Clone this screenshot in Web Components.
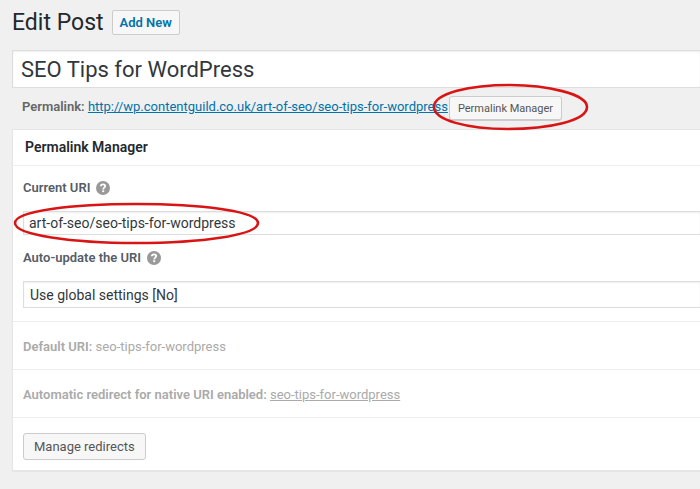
<!DOCTYPE html>
<html lang="en">
<head>
<meta charset="utf-8">
<meta name="viewport" content="width=device-width, initial-scale=1">
<title>Edit Post</title>
<style>
  body {
    margin: 0;
    background: #f0f0f0;
    color: #555d66;
    font: 13px/18px Roboto, "Liberation Sans", sans-serif;
  }
</style>
</head>
<body>

<post-editor>
  <wp-button slot="action" variant="action">Add New</wp-button>

  <post-title value="SEO Tips for WordPress"></post-title>

  <perma-link href="http://wp.contentguild.co.uk/art-of-seo/seo-tips-for-wordpress">
    <hand-circle shape="button"><wp-button variant="small">Permalink Manager</wp-button></hand-circle>
  </perma-link>

  <meta-box heading="Permalink Manager">
    <meta-fields>
      <uri-field label="Current URI" value="art-of-seo/seo-tips-for-wordpress"></uri-field>
      <choice-field label="Auto-update the URI" options="Use global settings [No]|No|Yes"></choice-field>
    </meta-fields>
    <info-row label="Default URI:">seo-tips-for-wordpress</info-row>
    <info-row label="Automatic redirect for native URI enabled:" href="#redirect">seo-tips-for-wordpress</info-row>
    <meta-footer><wp-button>Manage redirects</wp-button></meta-footer>
  </meta-box>
</post-editor>

<script>
// small base class, every element clones its own template
class WpElement extends HTMLElement {
  constructor() {
    super();
    this.attachShadow({ mode: 'open' });
    const template = document.createElement('template');
    template.innerHTML = this.constructor.html;
    this.shadowRoot.appendChild(template.content.cloneNode(true));
  }

  $(selector) {
    return this.shadowRoot.querySelector(selector);
  }
}

class PostEditor extends WpElement {
  static html = `
    <style>
      :host { display: block; overflow: hidden; padding: 8px 0 16px 12px; }
      header { display: flex; align-items: center; gap: 8px; margin-bottom: 13px; }
      h1 { margin: 0; color: #23282d; font-size: 23px; font-weight: 400; line-height: 29px; }
    </style>
    <header>
      <h1>Edit Post</h1>
      <slot name="action"></slot>
    </header>
    <main><slot></slot></main>
  `;
}

class WpButton extends WpElement {
  static html = `
    <style>
      :host { display: inline-block; }
      button {
        display: block;
        box-sizing: border-box;
        height: 27px;
        margin: 0;
        padding: 0 10px;
        border: 1px solid #ccc;
        border-radius: 3px;
        background: #f7f7f7;
        color: #555;
        font: 13px/24px Roboto, "Liberation Sans", sans-serif;
        white-space: nowrap;
        cursor: pointer;
      }
      :host([variant="small"]) button {
        height: 25px;
        padding: 0 8px;
        box-shadow: inset 0 -1px 0 #ccc;
        font-size: 11px;
        line-height: 22px;
      }
      :host([variant="action"]) button {
        height: 25px;
        padding: 0 7px;
        border-radius: 2px;
        color: #0073aa;
        font-weight: 600;
        line-height: 22px;
      }
    </style>
    <button type="button"><slot></slot></button>
  `;
}

class PostTitle extends WpElement {
  static html = `
    <style>
      :host { display: block; }
      input {
        display: block;
        box-sizing: border-box;
        width: 100%;
        height: 38px;
        padding: 3px 8px;
        border: 1px solid #ddd;
        border-right: 0;
        border-radius: 0;
        background: #fff;
        box-shadow: inset 0 1px 2px rgba(0, 0, 0, .07);
        color: #32373c;
        font: 22px/28px Roboto, "Liberation Sans", sans-serif;
      }
    </style>
    <input type="text" aria-label="Title">
  `;

  connectedCallback() {
    this.$('input').value = this.getAttribute('value');
  }
}

class PermaLink extends WpElement {
  static html = `
    <style>
      :host { display: flex; align-items: flex-start; gap: 1px; padding: 8px 10px; line-height: 22px; white-space: nowrap; }
      strong { color: #666; font-weight: 600; }
      a { color: #0073aa; }
    </style>
    <span><strong>Permalink:</strong> <a></a></span>
    <slot></slot>
  `;

  connectedCallback() {
    const link = this.$('a');
    link.href = this.getAttribute('href');
    link.textContent = this.getAttribute('href');
  }
}

// red pen stroke that lies over whatever is slotted in
class HandCircle extends WpElement {
  static html = `
    <style>
      :host { display: block; position: relative; }
      svg {
        position: absolute;
        z-index: 1;
        overflow: visible;
        pointer-events: none;
      }
      path { fill: none; stroke: #d91414; stroke-width: 2.6; }
      .button { left: -17px; top: -13px; }
      .text { left: -9px; top: -9px; }
      :host([shape="button"]) .text,
      :host([shape="text"]) .button { display: none; }
    </style>
    <slot></slot>
    <svg class="button" width="156" height="48" viewBox="0 0 156 48" aria-hidden="true">
      <path d="M78 2 C115 2 155 11 155 24 C155 38 116 46 76 46 C35 46 2 37 2 24 C2 10 38 2 78 2Z"/>
    </svg>
    <svg class="text" width="246" height="43" viewBox="0 0 246 43" aria-hidden="true">
      <path d="M122 2 C186 2 244 9 244 21 C244 33 188 41 122 41 C58 41 1 33 1 21 C1 9 58 2 122 2Z"/>
    </svg>
  `;
}

class MetaBox extends WpElement {
  static html = `
    <style>
      :host {
        display: block;
        border: 1px solid #e5e5e5;
        border-right: 0;
        background: #fff;
        box-shadow: 0 1px 1px rgba(0, 0, 0, .04);
      }
      h2 {
        margin: 0;
        padding: 8px 12px 9px;
        border-bottom: 1px solid #eee;
        color: #23282d;
        font-size: 14px;
        font-weight: 600;
        line-height: 18px;
      }
    </style>
    <h2></h2>
    <slot></slot>
  `;

  connectedCallback() {
    this.$('h2').textContent = this.getAttribute('heading');
  }
}

class MetaFields extends WpElement {
  static html = `
    <style>
      :host { display: grid; gap: 14px; padding: 13px 0 13px 10px; }
    </style>
    <slot></slot>
  `;
}

class HelpIcon extends WpElement {
  static html = `
    <style>
      :host { display: block; width: 14px; height: 14px; }
      svg { display: block; }
    </style>
    <svg width="14" height="14" viewBox="0 0 14 14" aria-hidden="true">
      <circle cx="7" cy="7" r="7" fill="#999"/>
      <path d="M4.8 5.2 C4.9 3.9 5.8 3.3 7 3.3 C8.3 3.3 9.2 4 9.2 5.1 C9.2 6.6 7.2 6.6 7.2 8.4" fill="none" stroke="#fff" stroke-width="1.8"/>
      <rect x="6.2" y="9.3" width="2" height="1.8" fill="#fff"/>
    </svg>
  `;
}

const fieldStyle = `
  :host { display: block; }
  .label { display: flex; align-items: center; gap: 6px; margin-bottom: 14px; }
  label { color: #555d66; font-weight: 600; }
  input, select {
    display: block;
    box-sizing: border-box;
    width: 100%;
    margin: 0;
    border: 1px solid #ddd;
    border-right: 0;
    border-radius: 0;
    background: #fff;
    box-shadow: inset 0 1px 2px rgba(0, 0, 0, .07);
    color: #32373c;
    font: 14px/18px Roboto, "Liberation Sans", sans-serif;
    appearance: none;
  }
  input { height: 24px; padding: 2px 5px; }
  select { height: 27px; padding: 3px 6px; }
`;

class UriField extends WpElement {
  static html = `
    <style>${fieldStyle}</style>
    <div class="label"><label for="uri"></label><help-icon></help-icon></div>
    <hand-circle shape="text"><input type="text" id="uri"></hand-circle>
  `;

  connectedCallback() {
    this.$('label').textContent = this.getAttribute('label');
    this.$('input').value = this.getAttribute('value');
  }
}

class ChoiceField extends WpElement {
  static html = `
    <style>${fieldStyle}</style>
    <div class="label"><label for="choice"></label><help-icon></help-icon></div>
    <select id="choice"></select>
  `;

  connectedCallback() {
    this.$('label').textContent = this.getAttribute('label');
    this.$('select').replaceChildren(
      ...this.getAttribute('options').split('|').map(text => new Option(text))
    );
  }
}

class InfoRow extends WpElement {
  static html = `
    <style>
      :host { display: block; padding: 16px 10px 13px; border-top: 1px solid #eee; color: #aaa; }
      strong { font-weight: 600; }
      a { color: inherit; }
    </style>
    <strong></strong> <span><slot></slot></span>
  `;

  connectedCallback() {
    this.$('strong').textContent = this.getAttribute('label');
    if (this.hasAttribute('href')) {
      const link = document.createElement('a');
      link.href = this.getAttribute('href');
      link.append(this.$('slot'));
      this.$('span').append(link);
    }
  }
}

class MetaFooter extends WpElement {
  static html = `
    <style>
      :host { display: flex; padding: 15px 10px 10px; border-top: 1px solid #eee; }
    </style>
    <slot></slot>
  `;
}

window.customElements.define('help-icon', HelpIcon);
window.customElements.define('hand-circle', HandCircle);
window.customElements.define('wp-button', WpButton);
window.customElements.define('post-title', PostTitle);
window.customElements.define('perma-link', PermaLink);
window.customElements.define('meta-box', MetaBox);
window.customElements.define('meta-fields', MetaFields);
window.customElements.define('uri-field', UriField);
window.customElements.define('choice-field', ChoiceField);
window.customElements.define('info-row', InfoRow);
window.customElements.define('meta-footer', MetaFooter);
window.customElements.define('post-editor', PostEditor);
</script>
</body>
</html>
